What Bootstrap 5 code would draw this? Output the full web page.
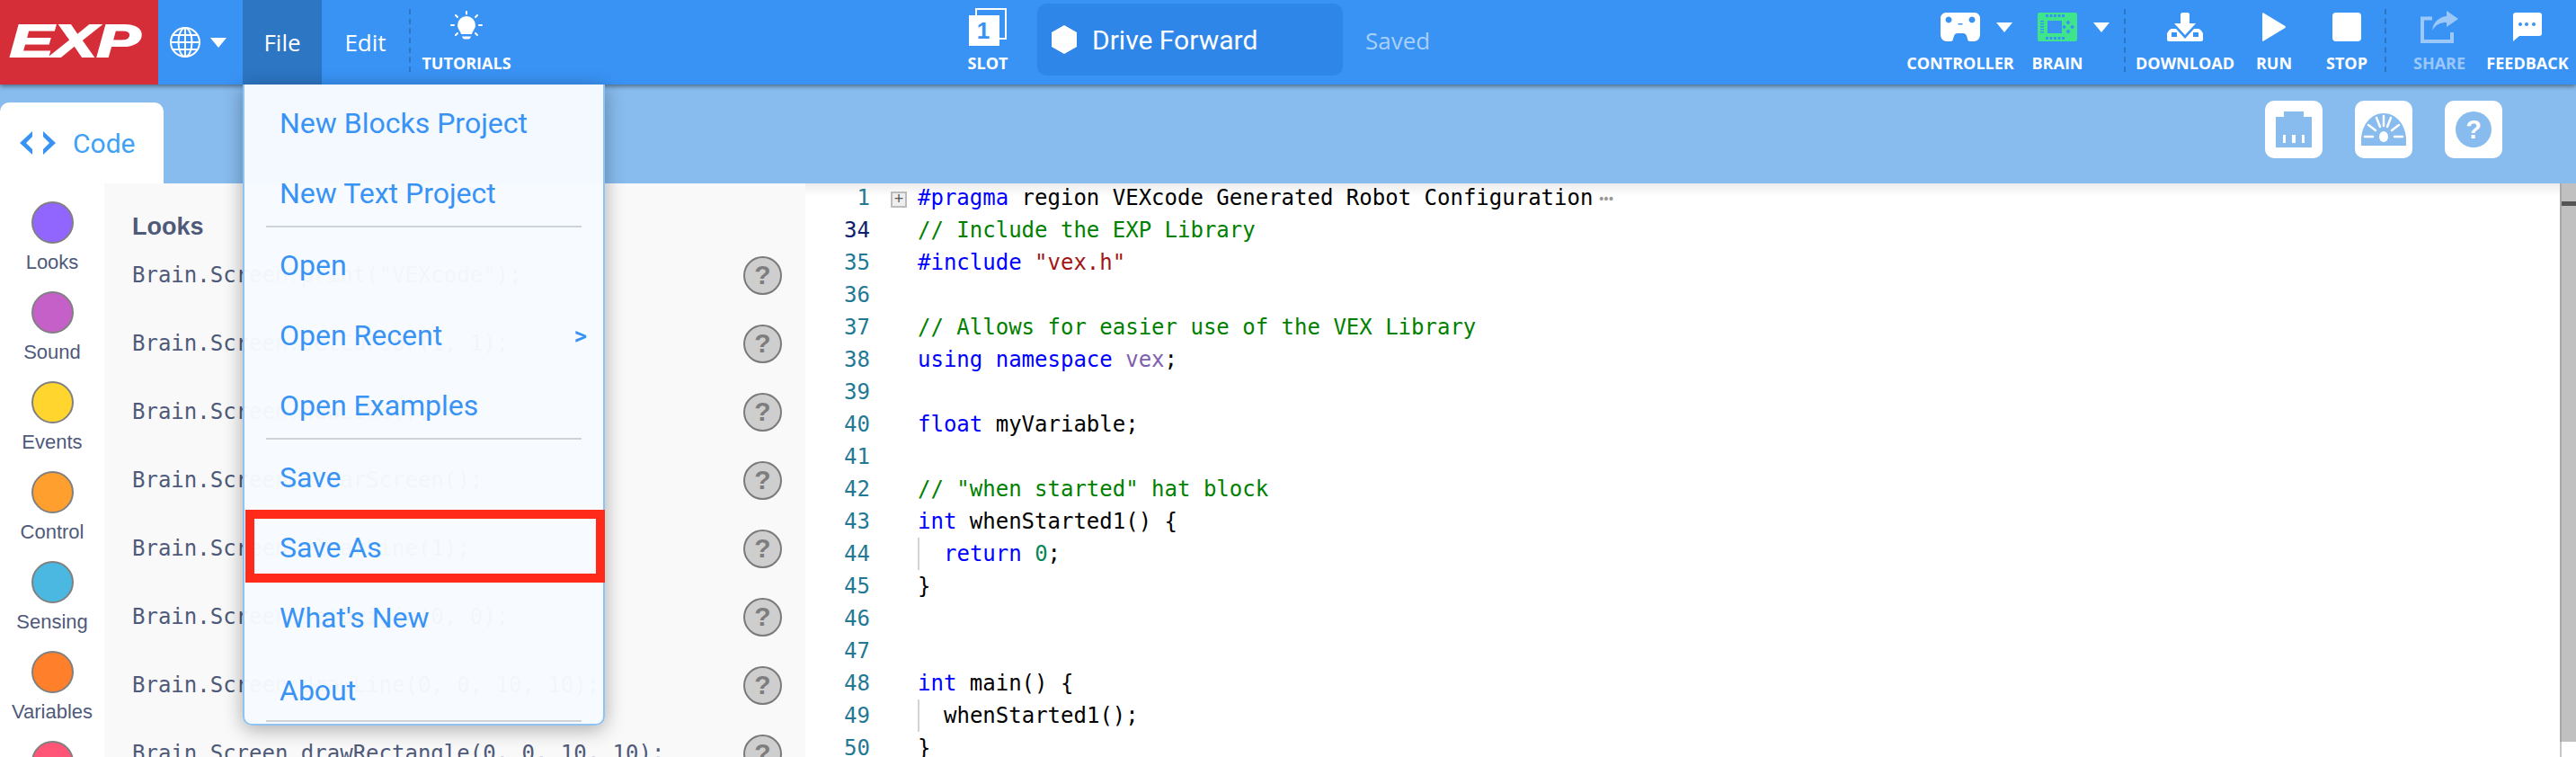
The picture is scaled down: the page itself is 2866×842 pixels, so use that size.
<!DOCTYPE html>
<html lang="en">
<head>
<meta charset="utf-8">
<title>VEXcode EXP</title>
<link rel="stylesheet" href="https://cdn.jsdelivr.net/npm/bootstrap@5.3.0/dist/css/bootstrap.min.css">
<style>
html,body{height:842px;overflow:hidden;background:#fff}
body{font-family:"Open Sans",sans-serif}
.vx-top{height:94px;background:#3993f5;box-shadow:0 2px 5px rgba(0,0,0,.45);position:relative;z-index:5;color:#fff}
.vx-logo{width:176px;background:#d62e38;padding-left:11px;overflow:hidden;flex:none}
.vx-logotxt{display:inline-block;font:italic 700 50px/92px "Liberation Sans",sans-serif;-webkit-text-stroke:2px #fff;transform:scaleX(1.45);transform-origin:left center}
.vx-lang{width:94px;padding-left:13px;gap:11px}
.vx-caret{width:0;height:0;border-left:9px solid transparent;border-right:9px solid transparent;border-top:11px solid #fff;flex:none}
.vx-file{width:88px;background:#2c76c4;font-size:26px;position:relative}
.vx-edit{width:97px;font-size:26px}
.vx-dash{border-left:2px dashed #2c76c4;height:70px;align-self:flex-start;margin-top:10px;flex:none}
.vx-tool{display:flex;flex-direction:column;align-items:center;flex:none;height:94px;padding-top:9px}
.vx-tool svg{display:block;flex:none}
.vx-ico{height:42px;display:flex;align-items:center;justify-content:center;flex:none}
.vx-ico .vx-caret{margin-left:18px}
.vx-label{font-size:18px;font-weight:700;line-height:24px;margin-top:7px;white-space:nowrap}
.vx-proj{width:340px;height:80px;background:#2e86e9;border-radius:10px;margin:4px 0 0 25px;padding-left:16px;gap:17px;font:400 30px "Roboto",sans-serif;flex:none;align-self:flex-start}
.vx-saved{margin-left:25px;color:#a8cff8;font:400 26px "Open Sans",sans-serif;padding-bottom:4px}
.vx-bar{height:110px;background:#88bcee;padding-top:20px}
.vx-tab{width:182px;height:90px;background:#fff;border-radius:10px 10px 0 0;padding:0 0 0 22px;gap:19px;color:#3fa2f5;font:400 30px "Roboto",sans-serif}
.vx-sq{width:64px;height:64px;background:#fff;border-radius:10px;flex:none;margin-top:-2px}
.vx-main{height:638px;overflow:hidden}
.vx-cats{width:116px;flex:none;padding-top:20px;font-family:"Liberation Sans",sans-serif;color:#4f5a7a;font-size:22px}
.vx-cat{height:100px;display:flex;flex-direction:column;align-items:center}
.vx-dot{width:47px;height:47px;border-radius:50%;border:2px solid #808080;flex:none}
.vx-catname{margin-top:8px;line-height:26px}
.vx-panel{width:780px;flex:none;background:#f9f9f9;padding:32px 0 0 31px;color:#4f5a7a}
.vx-head{font:700 27px/32px "Liberation Sans",sans-serif;height:32px}
.vx-row{height:76px;display:flex;justify-content:space-between;align-items:center;font:400 24px "DejaVu Sans Mono",monospace;padding-right:26px;white-space:pre}
.vx-q{width:43px;height:43px;border-radius:50%;border:2px solid #7a7a7a;background:#cecece;color:#7d7d7d;font:700 30px/38px "Liberation Sans",sans-serif;text-align:center;flex:none}
.vx-ed{flex:1 1 auto;font:400 24px/36px "DejaVu Sans Mono",monospace;min-width:0;display:flex;background:linear-gradient(#ececec,#fff 14px)}
.vx-nums{width:72px;flex:none;text-align:right;color:#237893;margin-top:-2px}
.vx-nums .now{color:#0b216f}
.vx-fold{width:53px;flex:none;padding:9px 0 0 23px}
.vx-foldbox{width:18px;height:18px;border:2px solid #bcbcbc;background:#eee;color:#555;font:400 18px/13px "Liberation Sans",sans-serif;text-align:center}
.vx-code{flex:1 1 auto;color:#000;margin-top:-2px}
.vx-l{height:36px;white-space:pre}
.kw{color:#0000ff}.cm{color:#008000}.st{color:#a31515}.nu{color:#098658}.ns{color:#7f5fad}
.vx-guide{border-left:2px solid #d3d3d3;display:block;height:36px;padding-left:27px}
.vx-more{color:#999;font-size:14px;letter-spacing:-3px;vertical-align:2px;margin-left:5px}
.vx-scroll{width:18px;flex:none;background:#fff;border-left:2px solid #c6c6c6}
.vx-track{height:621px;background:#c0c0c0;padding-top:20px;margin-left:0;box-shadow:-2px 0 0 #a8a8a8}
.vx-thumb{height:5px;background:#555}
.vx-menu.dropdown-menu{display:block;position:absolute;top:94px;left:0;width:403px;margin:0;padding:4px 0 2px;background:rgba(247,251,255,.97);border:2px solid #8fc3f3;border-top:0;border-radius:0 0 10px 10px;box-shadow:0 4px 22px rgba(0,0,0,.32);z-index:10}
.vx-menu .dropdown-item{height:78px;display:flex;align-items:center;justify-content:space-between;padding:0 18px 0 39px;color:#3993f5;font:400 32px "Roboto",sans-serif;position:relative}
.vx-menu .dropdown-item.vx-lastitem{height:70px;padding-top:14px}
.vx-menu .dropdown-divider{margin:-3px 24px 3px;border-top:2px solid #cdd3da;opacity:1;height:0}
.vx-menu .dropdown-divider.vx-lastdiv{margin:5px 24px 0}
.vx-menu .vx-chev{font-size:28px;font-weight:500}
.vx-red{position:absolute;left:1px;right:-2px;top:-3px;bottom:0;border:10px solid #ff2a1a;pointer-events:none}
</style>
</head>
<body>
<header class="vx-top d-flex align-items-stretch">
  <div class="vx-logo"><span class="vx-logotxt">EXP</span></div>
  <div class="vx-lang d-flex align-items-center">
    <svg width="34" height="34" viewBox="0 0 34 34" fill="none" stroke="#fff" stroke-width="2"><circle cx="17" cy="17" r="16"/><ellipse cx="17" cy="17" rx="7.5" ry="16"/><path d="M17 1v32M1 17h32M3.500 9h27M3.500 25h27"/></svg>
    <span class="vx-caret"></span>
  </div>
  <div class="vx-file d-flex align-items-center justify-content-center">File
    <div class="vx-menu dropdown-menu show">
      <a class="dropdown-item" href="#">New Blocks Project</a>
      <a class="dropdown-item" href="#">New Text Project</a>
      <hr class="dropdown-divider">
      <a class="dropdown-item" href="#">Open</a>
      <a class="dropdown-item" href="#">Open Recent<span class="vx-chev">&gt;</span></a>
      <a class="dropdown-item" href="#">Open Examples</a>
      <hr class="dropdown-divider">
      <a class="dropdown-item" href="#">Save</a>
      <a class="dropdown-item" href="#">Save As<span class="vx-red"></span></a>
      <a class="dropdown-item" href="#">What's New</a>
      <a class="dropdown-item vx-lastitem" href="#">About</a>
      <hr class="dropdown-divider vx-lastdiv">
    </div>
  </div>
  <div class="vx-edit d-flex align-items-center justify-content-center">Edit</div>
  <span class="vx-dash"></span>
  <div class="vx-tool" style="width:124px">
    <div class="vx-ico"><svg width="36" height="36" viewBox="0 0 36 36" fill="#fff"><path d="M8 16a10 10 0 0 1 20 0c0 4-3 6-4 10H12c-1-4-4-6-4-10z"/><path d="M13 28.500h10c0 1-1 2-2 3h-6c-1-1-2-2-2-3z"/><g stroke="#fff" stroke-width="2" stroke-linecap="round"><path d="M18 1v2.500M6 5l2 2M30 5l-2 2M1 16h3M32 16h3M6 27l2-2M30 27l-2-2"/></g></svg></div>
    <div class="vx-label">TUTORIALS</div>
  </div>
  <div class="vx-tool" style="width:60px;margin-left:488px">
    <div class="vx-ico"><svg width="42" height="42" viewBox="0 0 42 42"><path d="M8 1h33v33H8z" fill="none" stroke="#fff" stroke-width="2"/><rect x="0" y="8" width="34" height="34" fill="#fff"/><text x="16" y="34" font-family="Liberation Sans" font-weight="700" font-size="26" fill="#3993f5" text-anchor="middle">1</text></svg></div>
    <div class="vx-label">SLOT</div>
  </div>
  <div class="vx-proj d-flex align-items-center">
    <svg width="28" height="32" viewBox="0 0 28 32" fill="#fff"><path d="M14 0l14 8v16l-14 8-14-8V8z"/></svg>
    <span>Drive Forward</span>
  </div>
  <div class="vx-saved d-flex align-items-center">Saved</div>
  <div class="d-flex ms-auto pe-2">
    <div class="vx-tool" style="width:120px">
      <div class="vx-ico" style="padding-left:36px"><svg width="44" height="32" viewBox="0 0 44 32" fill="#fff"><path fill-rule="evenodd" d="M6 0h32c3 0 6 3 6 6v18c0 5-3 8-7 8h-4c-2 0-3-1-3-3l-1-3c-.5-2-2-3-4-3h-6c-2 0-3.500 1-4 3l-1 3c0 2-1 3-3 3H7c-4 0-7-3-7-8V6c0-3 3-6 6-6zM9 4.500a3.500 3.500 0 1 0 .01 0zM35 4.500a3.500 3.500 0 1 0 .01 0zM19.500 12h5v1.500h-5z"/></svg><span class="vx-caret"></span></div>
      <div class="vx-label">CONTROLLER</div>
    </div>
    <div class="vx-tool" style="width:58px;margin-left:19px">
      <div class="vx-ico" style="padding-left:36px"><svg width="44" height="32" viewBox="0 0 44 32"><rect width="44" height="32" rx="2" fill="#3ee58a"/><rect x="11" y="9" width="16" height="14" fill="#3993f5"/><g fill="#3993f5"><path d="M9 2h3v3H9zM13.500 2h3v3h-3zM18 2h3v3h-3zM22.500 2h3v3h-3zM27 2h3v3h-3zM9 27h3v3H9zM13.500 27h3v3h-3zM18 27h3v3h-3zM22.500 27h3v3h-3zM27 27h3v3h-3zM3 9h4v1.500H3zM3 12h4v1.500H3zM3 15h4v1.500H3zM3 18h4v1.500H3zM3 21h4v1.500H3z"/><path d="M34 8.500l2.500 2.500-2.500 2.500-2.500-2.500zM34 18.500l2.500 2.500-2.500 2.500-2.500-2.500zM29.500 13.500l2.500 2.500-2.500 2.500-2-2.500zM38.500 13.500l2.500 2.500-2.500 2.500-2.500-2.500z"/></g></svg><span class="vx-caret"></span></div>
      <div class="vx-label">BRAIN</div>
    </div>
    <span class="vx-dash" style="margin-left:45px"></span>
    <div class="vx-tool" style="width:108px;margin-left:12px">
      <div class="vx-ico"><svg width="40" height="32" viewBox="0 0 40 32" fill="#fff"><path d="M15 2c0-1 1-2 2-2h6c1 0 2 1 2 2v10h7L20 25 8 12h7z"/><path fill-rule="evenodd" d="M5 18h5l10 11 10-11h5c1 0 2 1 3 2l2 3v7c0 1-1 2-2 2H2c-1 0-2-1-2-2v-7l2-3c1-1 2-2 3-2zM5 22v5h6v-5zM29 22v5h6v-5z"/></svg></div>
      <div class="vx-label">DOWNLOAD</div>
    </div>
    <div class="vx-tool" style="width:40px;margin-left:25px">
      <div class="vx-ico"><svg width="26" height="32" viewBox="0 0 26 32" fill="#fff"><path d="M0 1c0-1 1-1 1.500-.5L25.500 15c.5.500.5 1.500 0 2L1.500 31.500c-.5.500-1.500.5-1.500-.5z"/></svg></div>
      <div class="vx-label">RUN</div>
    </div>
    <div class="vx-tool" style="width:46px;margin-left:38px">
      <div class="vx-ico"><svg width="32" height="32" viewBox="0 0 32 32" fill="#fff"><rect width="32" height="32" rx="4"/></svg></div>
      <div class="vx-label">STOP</div>
    </div>
    <span class="vx-dash" style="margin-left:19px"></span>
    <div class="vx-tool" style="width:58px;margin-left:30px;color:#9bc8f9">
      <div class="vx-ico"><svg width="42" height="36" viewBox="0 0 42 36"><path d="M13 8.500H2v25.500h33V24" fill="none" stroke="#9bc8f9" stroke-width="4"/><path fill="#9bc8f9" d="M29 0l13 9-13 9v-5c-7 0-12 2-16 9 1-9 7-15 16-16z"/></svg></div>
      <div class="vx-label">SHARE</div>
    </div>
    <div class="vx-tool" style="width:92px;margin-left:23px">
      <div class="vx-ico"><svg width="32" height="32" viewBox="0 0 32 32"><path fill="#fff" d="M3 0h26c2 0 3 1 3 3v20c0 2-1 3-3 3H7l-7 6V3c0-2 1-3 3-3z"/><g fill="#3993f5"><circle cx="8" cy="13" r="2"/><circle cx="15" cy="13" r="2"/><circle cx="23" cy="13" r="2"/></g></svg></div>
      <div class="vx-label">FEEDBACK</div>
    </div>
  </div>
</header>

<section class="vx-bar d-flex">
  <div class="vx-tab d-flex align-items-center">
    <svg width="40" height="26" viewBox="0 0 40 26" fill="#3993f5"><path d="M14 0v6L7 13l7 7v6L0 13zM26 0v6l7 7-7 7v6l14-13z"/></svg>
    <span>Code</span>
  </div>
  <div class="ms-auto d-flex" style="padding-right:82px;gap:36px">
    <div class="vx-sq d-flex align-items-center justify-content-center"><svg width="40" height="40" viewBox="0 0 40 40" fill="#88bcee"><path fill-rule="evenodd" d="M9 0h22v6h9v34H0V6h9zM8 26v9h3v-9zM18 26v9h4v-9zM29 26v9h3v-9z"/></svg></div>
    <div class="vx-sq d-flex align-items-center justify-content-center"><svg width="50" height="36" viewBox="0 0 50 36"><path fill="#88bcee" d="M0 36v-6C0 13 11 0 25 0s25 13 25 30v6z"/><g stroke="#fff" stroke-width="2.500" stroke-linecap="round"><path d="M4 26h9M37 26h9M8 13l8 6M42 13l-8 6M17 5l4 10M33 5l-4 10M25 3v11"/></g><ellipse cx="25" cy="26" rx="5" ry="6" fill="#fff"/></svg></div>
    <div class="vx-sq d-flex align-items-center justify-content-center"><svg width="40" height="40" viewBox="0 0 40 40"><circle cx="20" cy="20" r="20" fill="#88bcee"/><text x="20" y="30" font-family="Liberation Sans" font-weight="700" font-size="29" fill="#fff" text-anchor="middle">?</text></svg></div>
  </div>
</section>

<main class="vx-main d-flex">
  <nav class="vx-cats">
    <div class="vx-cat"><span class="vx-dot" style="background:#9166ff"></span><span class="vx-catname">Looks</span></div>
    <div class="vx-cat"><span class="vx-dot" style="background:#c560c9"></span><span class="vx-catname">Sound</span></div>
    <div class="vx-cat"><span class="vx-dot" style="background:#ffd52e"></span><span class="vx-catname">Events</span></div>
    <div class="vx-cat"><span class="vx-dot" style="background:#ff9f2e"></span><span class="vx-catname">Control</span></div>
    <div class="vx-cat"><span class="vx-dot" style="background:#4ab8e0"></span><span class="vx-catname">Sensing</span></div>
    <div class="vx-cat"><span class="vx-dot" style="background:#ff7f2a"></span><span class="vx-catname">Variables</span></div>
    <div class="vx-cat"><span class="vx-dot" style="background:#ff5577"></span></div>
  </nav>
  <aside class="vx-panel">
    <div class="vx-head">Looks</div>
    <div class="vx-row"><span>Brain.Screen.print("VEXcode");</span><span class="vx-q">?</span></div>
    <div class="vx-row"><span>Brain.Screen.setCursor(1, 1);</span><span class="vx-q">?</span></div>
    <div class="vx-row"><span>Brain.Screen.newLine();</span><span class="vx-q">?</span></div>
    <div class="vx-row"><span>Brain.Screen.clearScreen();</span><span class="vx-q">?</span></div>
    <div class="vx-row"><span>Brain.Screen.clearLine(1);</span><span class="vx-q">?</span></div>
    <div class="vx-row"><span>Brain.Screen.setOrigin(0, 0);</span><span class="vx-q">?</span></div>
    <div class="vx-row"><span>Brain.Screen.drawLine(0, 0, 10, 10);</span><span class="vx-q">?</span></div>
    <div class="vx-row"><span>Brain.Screen.drawRectangle(0, 0, 10, 10);</span><span class="vx-q">?</span></div>
  </aside>
  <section class="vx-ed">
    <div class="vx-nums"><div>1</div><div class="now">34</div><div>35</div><div>36</div><div>37</div><div>38</div><div>39</div><div>40</div><div>41</div><div>42</div><div>43</div><div>44</div><div>45</div><div>46</div><div>47</div><div>48</div><div>49</div><div>50</div></div>
    <div class="vx-fold"><div class="vx-foldbox">+</div></div>
    <div class="vx-code">
      <div class="vx-l"><span class="kw">#pragma</span> region VEXcode Generated Robot Configuration<span class="vx-more">•••</span></div>
      <div class="vx-l"><span class="cm">// Include the EXP Library</span></div>
      <div class="vx-l"><span class="kw">#include</span> <span class="st">"vex.h"</span></div>
      <div class="vx-l"></div>
      <div class="vx-l"><span class="cm">// Allows for easier use of the VEX Library</span></div>
      <div class="vx-l"><span class="kw">using</span> <span class="kw">namespace</span> <span class="ns">vex</span>;</div>
      <div class="vx-l"></div>
      <div class="vx-l"><span class="kw">float</span> myVariable;</div>
      <div class="vx-l"></div>
      <div class="vx-l"><span class="cm">// "when started" hat block</span></div>
      <div class="vx-l"><span class="kw">int</span> whenStarted1() {</div>
      <div class="vx-l"><span class="vx-guide"><span class="kw">return</span> <span class="nu">0</span>;</span></div>
      <div class="vx-l">}</div>
      <div class="vx-l"></div>
      <div class="vx-l"></div>
      <div class="vx-l"><span class="kw">int</span> main() {</div>
      <div class="vx-l"><span class="vx-guide">whenStarted1();</span></div>
      <div class="vx-l">}</div>
    </div>
    <div class="vx-scroll"><div class="vx-track"><div class="vx-thumb"></div></div></div>
  </section>
</main>
<script src="https://cdn.jsdelivr.net/npm/bootstrap@5.3.0/dist/js/bootstrap.bundle.min.js"></script>
</body>
</html>
